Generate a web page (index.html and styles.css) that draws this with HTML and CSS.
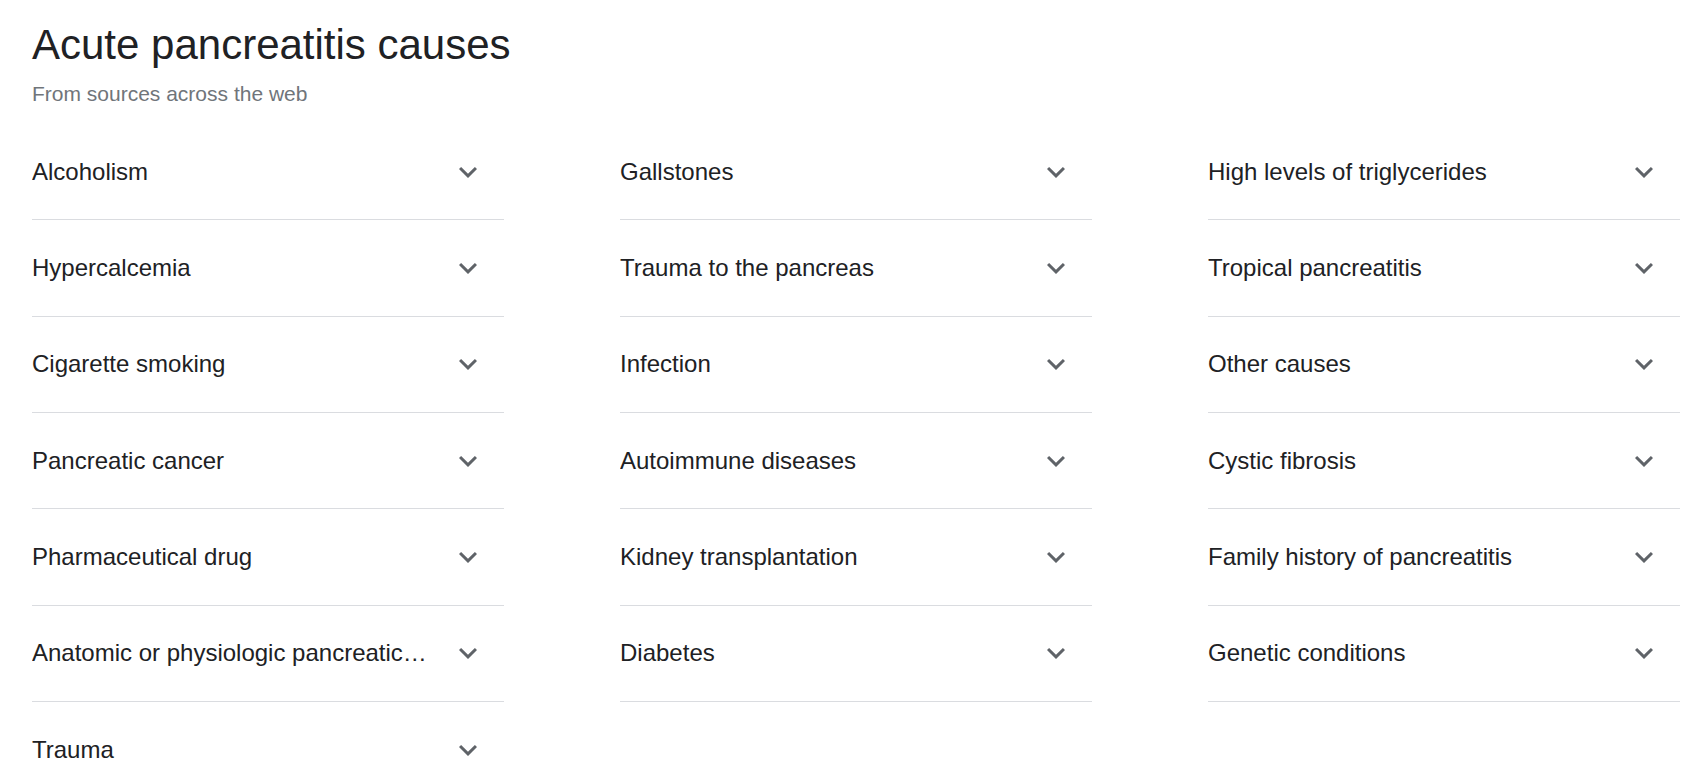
FILE: index.html
```html
<!DOCTYPE html>
<html lang="en">
<head>
<meta charset="utf-8">
<title>Acute pancreatitis causes</title>
<link rel="stylesheet" href="styles.css">
</head>
<body>
<div class="panel">
  <div class="header">
    <h1 class="title">Acute pancreatitis causes</h1>
    <div class="subtitle">From sources across the web</div>
  </div>
  <div class="grid">
    <div class="col">
      <div class="item"><span class="label">Alcoholism</span><svg class="chev" viewBox="0 0 24 24"><path d="M16.59 8.59L12 13.17 7.41 8.59 6 10l6 6 6-6z"/></svg></div>
      <div class="item"><span class="label">Hypercalcemia</span><svg class="chev" viewBox="0 0 24 24"><path d="M16.59 8.59L12 13.17 7.41 8.59 6 10l6 6 6-6z"/></svg></div>
      <div class="item"><span class="label">Cigarette smoking</span><svg class="chev" viewBox="0 0 24 24"><path d="M16.59 8.59L12 13.17 7.41 8.59 6 10l6 6 6-6z"/></svg></div>
      <div class="item"><span class="label">Pancreatic cancer</span><svg class="chev" viewBox="0 0 24 24"><path d="M16.59 8.59L12 13.17 7.41 8.59 6 10l6 6 6-6z"/></svg></div>
      <div class="item"><span class="label">Pharmaceutical drug</span><svg class="chev" viewBox="0 0 24 24"><path d="M16.59 8.59L12 13.17 7.41 8.59 6 10l6 6 6-6z"/></svg></div>
      <div class="item"><span class="label">Anatomic or physiologic pancreatic anomalies</span><svg class="chev" viewBox="0 0 24 24"><path d="M16.59 8.59L12 13.17 7.41 8.59 6 10l6 6 6-6z"/></svg></div>
      <div class="item"><span class="label">Trauma</span><svg class="chev" viewBox="0 0 24 24"><path d="M16.59 8.59L12 13.17 7.41 8.59 6 10l6 6 6-6z"/></svg></div>
    </div>
    <div class="col">
      <div class="item"><span class="label">Gallstones</span><svg class="chev" viewBox="0 0 24 24"><path d="M16.59 8.59L12 13.17 7.41 8.59 6 10l6 6 6-6z"/></svg></div>
      <div class="item"><span class="label">Trauma to the pancreas</span><svg class="chev" viewBox="0 0 24 24"><path d="M16.59 8.59L12 13.17 7.41 8.59 6 10l6 6 6-6z"/></svg></div>
      <div class="item"><span class="label">Infection</span><svg class="chev" viewBox="0 0 24 24"><path d="M16.59 8.59L12 13.17 7.41 8.59 6 10l6 6 6-6z"/></svg></div>
      <div class="item"><span class="label">Autoimmune diseases</span><svg class="chev" viewBox="0 0 24 24"><path d="M16.59 8.59L12 13.17 7.41 8.59 6 10l6 6 6-6z"/></svg></div>
      <div class="item"><span class="label">Kidney transplantation</span><svg class="chev" viewBox="0 0 24 24"><path d="M16.59 8.59L12 13.17 7.41 8.59 6 10l6 6 6-6z"/></svg></div>
      <div class="item"><span class="label">Diabetes</span><svg class="chev" viewBox="0 0 24 24"><path d="M16.59 8.59L12 13.17 7.41 8.59 6 10l6 6 6-6z"/></svg></div>
    </div>
    <div class="col">
      <div class="item"><span class="label">High levels of triglycerides</span><svg class="chev" viewBox="0 0 24 24"><path d="M16.59 8.59L12 13.17 7.41 8.59 6 10l6 6 6-6z"/></svg></div>
      <div class="item"><span class="label">Tropical pancreatitis</span><svg class="chev" viewBox="0 0 24 24"><path d="M16.59 8.59L12 13.17 7.41 8.59 6 10l6 6 6-6z"/></svg></div>
      <div class="item"><span class="label">Other causes</span><svg class="chev" viewBox="0 0 24 24"><path d="M16.59 8.59L12 13.17 7.41 8.59 6 10l6 6 6-6z"/></svg></div>
      <div class="item"><span class="label">Cystic fibrosis</span><svg class="chev" viewBox="0 0 24 24"><path d="M16.59 8.59L12 13.17 7.41 8.59 6 10l6 6 6-6z"/></svg></div>
      <div class="item"><span class="label">Family history of pancreatitis</span><svg class="chev" viewBox="0 0 24 24"><path d="M16.59 8.59L12 13.17 7.41 8.59 6 10l6 6 6-6z"/></svg></div>
      <div class="item"><span class="label">Genetic conditions</span><svg class="chev" viewBox="0 0 24 24"><path d="M16.59 8.59L12 13.17 7.41 8.59 6 10l6 6 6-6z"/></svg></div>
    </div>
  </div>
</div>
</body>
</html>
```

FILE: styles.css
```css
html, body {
  margin: 0;
  padding: 0;
  background: #fff;
}

body {
  font-family: "Liberation Sans", Arial, sans-serif;
  color: #202124;
  overflow: hidden;
}

.panel {
  width: 1648px;
  padding: 21px 0 0 32px;
}

.header {
  display: flex;
  flex-direction: column;
  gap: 11px;
}

.title {
  margin: 0;
  font-size: 42px;
  line-height: 48px;
  font-weight: 400;
  color: #202124;
}

.subtitle {
  font-size: 21px;
  line-height: 28px;
  color: #70757a;
}

.grid {
  margin-top: 16px;
  display: grid;
  grid-template-columns: repeat(3, minmax(0, 1fr));
  column-gap: 116px;
}

.col {
  display: flex;
  flex-direction: column;
  min-width: 0;
}

.item {
  display: flex;
  align-items: center;
  height: 95.33px;
  border-bottom: 1px solid #dadce0;
  padding-right: 18px;
}

.label {
  flex: 1;
  min-width: 0;
  margin-right: 18px;
  font-size: 24px;
  line-height: 32px;
  white-space: nowrap;
  overflow: hidden;
  text-overflow: ellipsis;
}

.chev {
  flex: none;
  width: 36px;
  height: 36px;
  fill: #5f6368;
}
```
